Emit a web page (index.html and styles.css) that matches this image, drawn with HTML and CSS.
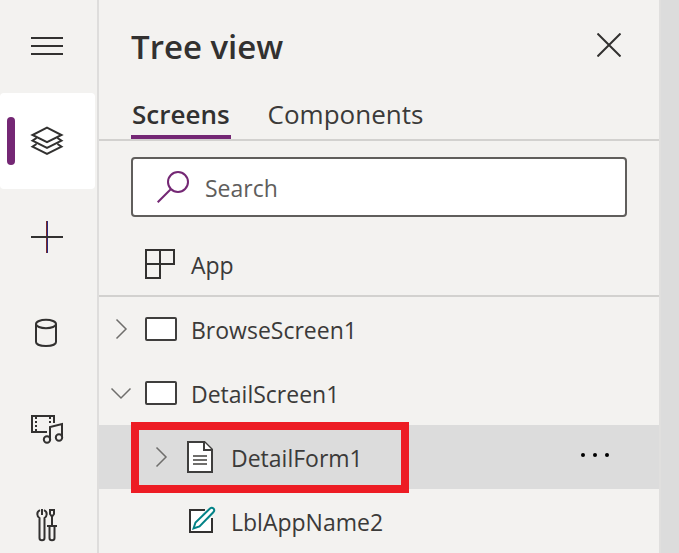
FILE: index.html
```html
<!DOCTYPE html>
<html lang="en">
<head>
<meta charset="utf-8">
<title>Tree view</title>
<link rel="stylesheet" href="styles.css">
</head>
<body>
<div class="studio">
  <nav class="rail" aria-label="Main">
    <button class="rail-item rail-menu" type="button" aria-label="Menu">
      <svg class="rail-icon" viewBox="0 0 40 40"><path d="M4 12H36M4 20H36M4 28H36"/></svg>
    </button>
    <button class="rail-item rail-active" type="button" aria-label="Tree view">
      <svg class="rail-icon" viewBox="0 0 40 40"><path d="M20 6.7L34.5 14L20 21.2L5.500 14ZM9.500 17L5.500 19.700L20 27L34.500 19.700L30.500 17M9.500 23L5.500 25.700L20 33L34.500 25.700L30.500 23"/></svg>
    </button>
    <button class="rail-item" type="button" aria-label="Insert">
      <svg class="rail-icon" viewBox="0 0 40 40"><path class="fringe-warm" d="M19.500 4V36"/><path class="fringe-cool" d="M20.500 4V36"/><path d="M4 20H36"/></svg>
    </button>
    <button class="rail-item" type="button" aria-label="Data">
      <svg class="rail-icon" viewBox="0 0 40 40"><ellipse cx="19" cy="11" rx="10" ry="4.200"/><path d="M9 11V29C9 34.300 29 34.300 29 29V11"/></svg>
    </button>
    <button class="rail-item" type="button" aria-label="Media">
      <svg class="rail-icon" viewBox="0 0 40 40"><path d="M20 23H5V7H27V14"/><path stroke-dasharray="2 2" d="M9 8V23M23 8V14"/><path d="M23 31V18L35 15V28"/><circle cx="20" cy="30.500" r="3.200"/><circle cx="32" cy="28.500" r="3.200"/></svg>
    </button>
    <button class="rail-item" type="button" aria-label="Tools">
      <svg class="rail-icon" viewBox="0 0 40 40"><path d="M13 5.200C9 7 10 11.500 12.500 13V33C12.500 36 17.500 36 17.500 33V13C20 11.500 21 7 17 5.200M15 4V10M23 5H27V9L25.500 11H24.500L23 9ZM25 11V21M20 21H30M22.500 22V33C22.500 36 27.500 36 27.500 33V22"/></svg>
    </button>
  </nav>
  <main class="panel">
    <header class="panel-head">
      <h1 class="panel-title">Tree view</h1>
      <button class="close" type="button" aria-label="Close">
        <svg class="close-icon" viewBox="0 0 24 24"><path d="M.5.5L23.500 23.500M23.500.5L.5 23.500"/></svg>
      </button>
    </header>
    <div class="tabs" role="tablist">
      <button class="tab tab-selected" type="button" role="tab" aria-selected="true">Screens</button>
      <button class="tab" type="button" role="tab" aria-selected="false">Components</button>
    </div>
    <label class="search">
      <svg class="search-icon" viewBox="0 0 32 32"><circle cx="21" cy="11" r="10"/><path d="M14 18L.7 31.300"/></svg>
      <input class="search-input" type="text" placeholder="Search" aria-label="Search">
    </label>
    <div class="tree" role="tree">
      <div class="row row-app" role="treeitem">
        <span class="twisty"></span>
        <svg class="node-icon" viewBox="0 0 32 32"><path d="M1 2H29V16H1ZM1 16V30H15V2"/></svg>
        <span class="label">App</span>
      </div>
      <div class="row" role="treeitem" aria-expanded="false">
        <button class="twisty" type="button" aria-label="Expand"><svg class="chevron" viewBox="0 0 32 32"><path d="M11.500 6.500L21 16L11.500 25.500"/></svg></button>
        <svg class="node-icon screen" viewBox="0 0 32 32"><rect x="1" y="5" width="30" height="22" rx="1"/></svg>
        <span class="label">BrowseScreen1</span>
      </div>
      <div class="row" role="treeitem" aria-expanded="true">
        <button class="twisty" type="button" aria-label="Collapse"><svg class="chevron" viewBox="0 0 32 32"><path d="M6.500 11.500L16 21L25.500 11.500"/></svg></button>
        <svg class="node-icon screen" viewBox="0 0 32 32"><rect x="1" y="5" width="30" height="22" rx="1"/></svg>
        <span class="label">DetailScreen1</span>
      </div>
      <div class="row row-child row-selected" role="treeitem" aria-expanded="false">
        <button class="twisty" type="button" aria-label="Expand"><svg class="chevron" viewBox="0 0 32 32"><path d="M11.500 6.500L21 16L11.500 25.500"/></svg></button>
        <svg class="node-icon form" viewBox="0 0 32 32"><path d="M3 1H19.500L27 8.500V31H3Z"/><path d="M19 1V9H27"/><path class="form-lines" d="M8 15H22M8 19H22M8 23H22"/></svg>
        <span class="label">DetailForm1</span>
        <button class="more" type="button" aria-label="More"><svg class="more-icon" viewBox="0 0 32 32"><circle cx="4" cy="14" r="2"/><circle cx="16" cy="14" r="2"/><circle cx="28" cy="14" r="2"/></svg></button>
        <span class="callout"></span>
      </div>
      <div class="row row-child" role="treeitem">
        <span class="twisty"></span>
        <svg class="node-icon" viewBox="0 0 32 32"><path fill="#fff" stroke="none" d="M5 5H27V27H5Z"/><path d="M20 5H5V27H27V13"/><path class="pencil-gap" d="M20 12L28 4"/><path class="pencil" d="M8.500 23.500L10.500 17.500L25 3.500C27.500 1.500 30.500 4.500 28.500 7L14.500 21.500Z"/></svg>
        <span class="label">LblAppName2</span>
      </div>
    </div>
  </main>
  <div class="canvas"></div>
</div>
</body>
</html>
```
FILE: styles.css
```css
* {
  box-sizing: border-box;
}

body {
  margin: 0;
  font-family: "Segoe UI", "Open Sans", "Noto Sans", sans-serif;
  font-size: 23px;
  color: #3b3a39;
  background: #f3f2f0;
}

button {
  padding: 0;
  border: 0;
  background: none;
  font: inherit;
  color: inherit;
}

svg {
  display: block;
  flex: none;
  fill: none;
  stroke: #323130;
  stroke-width: 2;
}

.studio {
  display: flex;
  height: 100vh;
  overflow: hidden;
}

.rail {
  display: flex;
  flex: none;
  flex-direction: column;
  width: 99px;
  padding-right: 2px;
  border-right: 2px solid #dedddc;
}

.rail-item {
  display: flex;
  flex: none;
  align-items: center;
  height: 96px;
  padding-left: 27px;
}

.rail-menu {
  height: 93px;
  padding-bottom: 1px;
}

.rail-active {
  gap: 12px;
  padding-left: 7px;
  border-radius: 4px;
  background: #fff;
}

.rail-active::before {
  content: "";
  width: 8px;
  height: 48px;
  border-radius: 4px;
  background: #742774;
}

.rail-icon {
  width: 40px;
  height: 40px;
}

.fringe-warm {
  stroke: #7c2b28;
  stroke-width: 1;
}

.fringe-cool {
  stroke: #2a2a80;
  stroke-width: 1;
}

.panel {
  flex: 1;
  min-width: 0;
}

.panel-head {
  display: flex;
  align-items: center;
  justify-content: space-between;
  height: 93px;
  padding: 0 30px 0 32px;
}

.panel-title {
  margin: 0;
  font-size: 33px;
  font-weight: 600;
  color: #323130;
}

.close {
  display: flex;
  align-items: center;
  justify-content: center;
  width: 40px;
  height: 40px;
  margin-bottom: 3px;
}

.close-icon {
  width: 24px;
  height: 24px;
}

.tabs {
  display: flex;
  gap: 36px;
  padding-left: 32px;
  border-bottom: 2px solid #d2d1cf;
}

.tab {
  height: 46px;
  padding: 0 1px;
  border-bottom: 4px solid transparent;
  font-size: 26px;
}

.tab-selected {
  border-color: #742774;
  font-weight: 600;
  color: #323130;
}

.search {
  display: flex;
  align-items: center;
  gap: 16px;
  height: 60px;
  margin: 16px 32px;
  padding: 0 24px;
  border: 2px solid #605e5c;
  border-radius: 4px;
  background: #fff;
}

.search-icon {
  width: 32px;
  height: 32px;
  stroke: #742774;
}

.search-input {
  flex: 1;
  min-width: 0;
  padding: 2px 0 0;
  border: 0;
  outline: 0;
  background: none;
  font: inherit;
  color: inherit;
}

.search-input::placeholder {
  color: #605e5c;
  opacity: 1;
}

.row {
  position: relative;
  display: flex;
  align-items: center;
  height: 64px;
  padding: 0 48px 0 6px;
}

.row-app {
  border-bottom: 2px solid #d2d1cf;
}

.row-child {
  padding-left: 46px;
}

.row-selected {
  background: #dcdcdc;
}

.label {
  padding-top: 2px;
}

.twisty {
  flex: none;
  width: 32px;
  height: 32px;
  margin-right: 8px;
}

.chevron {
  stroke: #6f6e6c;
  stroke-width: 1.5;
}

.node-icon {
  width: 32px;
  height: 32px;
  margin-right: 14px;
}

.screen,
.form {
  fill: #fff;
  stroke: #3f3e3d;
}

.form-lines {
  stroke: #6f6e6c;
}

.pencil-gap {
  stroke: #f3f2f0;
  stroke-width: 9;
}

.pencil {
  fill: #fff;
  stroke: #038387;
}

.more {
  width: 32px;
  height: 32px;
  margin-left: auto;
}

.more-icon {
  fill: #000;
  stroke: none;
}

.callout {
  position: absolute;
  top: -3px;
  left: 32px;
  width: 278px;
  height: 71px;
  border: 8px solid #ed1c24;
}

.canvas {
  flex: none;
  width: 20px;
  border-left: 2px solid #e0dfde;
  background: #dcdcdc;
}
```
